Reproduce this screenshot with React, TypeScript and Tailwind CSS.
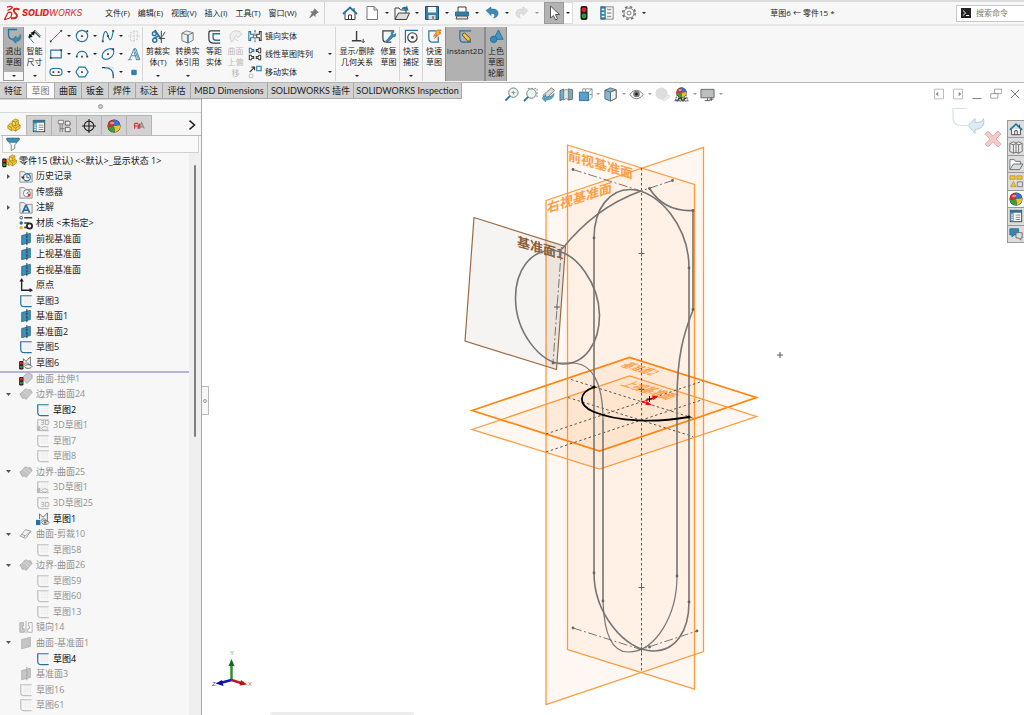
import { ReactNode, useState } from "react";

const BLUE = "#24749e";
const DARK = "#3c3c3c";

function Icon({ size = "size-4", children }: { size?: string; children: ReactNode }) {
  return (
    <svg viewBox="0 0 16 16" className={`${size} shrink-0`} fill="none" stroke={DARK} strokeWidth="1" aria-hidden="true">
      {children}
    </svg>
  );
}

function Caret({ dim = false }: { dim?: boolean }) {
  return (
    <svg viewBox="0 0 4 2" className="w-1 h-0.5 shrink-0" aria-hidden="true">
      <path d="M0 0h4L2 2z" fill={dim ? "#999" : "#222"} />
    </svg>
  );
}

/* ---------- shared drawings ---------- */

const trafficLight = (
  <g stroke="none">
    <rect x="4.500" y="1" width="7" height="14" rx="2" fill="#1c1c1c" />
    <circle cx="8" cy="4.800" r="2.400" fill="#e02424" />
    <circle cx="8" cy="11" r="2.400" fill="#2f9e2f" />
  </g>
);

const colorBall = (
  <g stroke="none">
    <circle cx="8" cy="8" r="7.500" fill="#333" />
    <path d="M8 8L7 1a7 7 0 0 1 8 6z" fill="#3b6fc8" />
    <path d="M8 8L7 1a7 7 0 0 0-6 8z" fill="#d93030" />
    <path d="M8 8l7-1a7 7 0 0 1-6 8z" fill="#f0c02c" />
    <path d="M8 8L1 9a7 7 0 0 0 8 6z" fill="#35a035" />
    <ellipse cx="6" cy="4.500" rx="2.500" ry="1.500" fill="#fff" opacity=".45" />
  </g>
);

const partShape = (
  <g stroke="#a37f12" strokeWidth=".8" strokeLinejoin="round">
    <path d="M1 8.500l3-2.500 2 1V3.500L9.500 1l3.500 1.500V7l2 1v3.500L10 15l-3-1.500-2 1L1 12z" fill="#f3ca3e" />
    <path d="M6 3.500L9.500 5 13 2.500M9.500 5v4L13 7M6 7v2l4 2.500V15M10 11.500L15 8M1 8.500L5 11v3.500M5 11l1-1" />
    <path d="M6 3.500L9.500 5v4L6 7.500z" fill="#ffe48a" />
  </g>
);

const homeShape = (
  <>
    <path d="M3 8v6.500h10V8" fill="#fff" />
    <path d="M6.500 14.500V10h3v4.500" />
    <path d="M1 9l7-6.500L15 9" stroke={BLUE} strokeWidth="1.800" />
    <path d="M12 3v3" stroke={DARK} />
  </>
);

const listShape = (
  <>
    <rect x="1.500" y="1.500" width="13" height="13" fill="#fff" />
    <path d="M2 2h3.500v12H2z" fill="#62a8cc" stroke="none" />
    <path d="M1.500 3h13" stroke={BLUE} strokeWidth="2.500" />
    <path d="M7.500 7h5.500M7.500 9.500h5.500M7.500 12h5.500" stroke="#777" />
    <path d="M2.500 7h2M2.500 9.500h2M2.500 12h2" stroke="#fff" />
  </>
);

const folderBase = <path d="M1 3h5l1.500 2H15v10H1z" fill="#eee" stroke="#888" />;

/* ---------- title bar ---------- */

const menus = ["文件(F)", "编辑(E)", "视图(V)", "插入(I)", "工具(T)", "窗口(W)"];

const quickActions: { label: string; dim?: boolean; icon: ReactNode }[] = [
  { label: "新建", icon: <path d="M3 1.500h7l3.500 3.500v9.500H3zM10 1.500V5h3.500" fill="#fff" stroke="#777" /> },
  {
    label: "打开",
    icon: (
      <>
        <path d="M1 14V3h4l1.500 2H12v3" fill="#fff" />
        <path d="M1 14.500l3.500-6.500H15.500l-3 6.500z" fill="#dcdcdc" />
        <path d="M7 5c1-3 3-4 5-3l1-1.500 1.500 5-4.500.5 1-1.500C9.500 3.500 8.500 4 7 5z" fill={BLUE} stroke="none" />
      </>
    ),
  },
  {
    label: "保存",
    icon: (
      <>
        <path d="M1.500 1.500h13v13h-13z" fill="#3580aa" stroke="#1b5573" />
        <path d="M4 2h8v5.500H4z" fill="#fff" stroke="none" />
        <path d="M4.500 10h7v4.500h-7z" fill="#ddd" stroke="none" />
        <path d="M9 11v3" />
      </>
    ),
  },
  {
    label: "打印",
    icon: (
      <>
        <path d="M4 7V2h8v5" fill="#fff" />
        <path d="M1.500 7h13v4h-13z" fill="#2f7fa9" stroke={BLUE} />
        <path d="M3 11h10l1 3H2z" fill="#ddd" stroke="#555" />
      </>
    ),
  },
  {
    label: "撤销",
    icon: <path d="M2 5.500l5-3.500v2.200c5-.7 7.500 1.600 7 4.800-.3 2.300-2 3.700-4.500 4 2-1.700 2-5-2.500-4.500v2z" fill="#3d8ab5" stroke="#286e93" strokeWidth=".6" />,
  },
  {
    label: "重做",
    dim: true,
    icon: <path d="M14 5.500L9 2v2.200c-5-.7-7.500 1.600-7 4.800.3 2.300 2 3.700 4.500 4-2-1.700-2-5 2.500-4.500v2z" fill="#dedede" stroke="#ccc" strokeWidth=".6" />,
  },
];

function TitleBar() {
  return (
    <header className="flex items-center h-[26px] shrink-0 bg-[#f7f7f7] border-t-2 border-b-2 border-t-[#dcdcdc] border-b-[#e6e6e6] text-[8px]">
      <div className="flex items-center w-[101px] ml-1 gap-0.5 text-[#d8281c]">
        <svg viewBox="0 0 16 16" className="size-4 shrink-0" fill="none" stroke="#d8281c" strokeWidth="1.300" aria-hidden="true">
          <path d="M3 2c4-1 6-.5 5 1-.8 1-2 1.500-4.500 2.500M4 7.500c4-1 4.500 1 3 4-1 1.800-3 2.500-6.500 3L4 7.500" />
          <path d="M15.500 4.500c-4-1.500-6.500-.5-5.500 2 .8 2 3.500 2.500 3 4.500-.5 2.500-3.500 2.500-6 2.200" strokeWidth="1.900" />
        </svg>
        <span className="italic text-[9px] font-[Inter]"><b className="font-extrabold">SOLID</b>WORKS</span>
      </div>
      <nav className="flex items-center gap-2 w-[204px]">
        {menus.map((m) => (
          <button key={m} className="whitespace-nowrap">{m}</button>
        ))}
      </nav>
      <button aria-label="固定" className="w-[15px]">
        <Icon size="size-2.5">
          <path d="M9 1l6 6-2 .5-3 3v3L7.500 11 1 15.500 5 8.500 2.500 6h3l3-3z" fill="#777" stroke="#777" />
        </Icon>
      </button>
      <div className="self-stretch w-px bg-[#d5d5d5] mr-[17px]" />
      <div className="flex items-center self-stretch">
        <button aria-label="主页" className="mr-1.5"><Icon>{homeShape}</Icon></button>
        {quickActions.map((a) => (
          <div key={a.label} className="flex items-center w-[30px]">
            <button aria-label={a.label}><Icon>{a.icon}</Icon></button>
            <span className="flex-1 flex justify-center"><Caret dim={a.dim} /></span>
          </div>
        ))}
        <button aria-label="选择" className="self-stretch w-5 flex items-center justify-center bg-[#b3b3b3] border border-[#999]">
          <Icon><path d="M4.500 1v12l3-2.500 2 4.500 2-1-2-4.500h4z" fill="#fff" stroke="#555" /></Icon>
        </button>
        <span className="self-stretch w-[9px] flex items-center justify-center bg-white border border-l-0 border-[#ddd]"><Caret /></span>
        <button aria-label="重建模型" className="w-[22px] flex justify-center"><Icon>{trafficLight}</Icon></button>
        <button aria-label="文件属性" className="w-6 flex justify-center">
          <Icon size="size-3.5">
            <rect x="1" y="1" width="14" height="14" fill="#fff" stroke="#777" />
            <path d="M1 1h5v14H1z" fill="#3a85ac" stroke={BLUE} />
            <path d="M2 4h3M2 8h3M2 12h3" stroke="#fff" strokeWidth="1.500" />
            <path d="M8 4h5M8 8h5M8 12h5" stroke="#999" strokeWidth="1.500" />
          </Icon>
        </button>
        <button aria-label="选项" className="w-5 flex justify-center">
          <Icon>
            <circle cx="8" cy="8" r="6.300" stroke="#777" strokeWidth="1.600" strokeDasharray="2.600 2.350" />
            <circle cx="8" cy="8" r="5" stroke="#777" fill="#fff" />
            <circle cx="8" cy="8" r="2" stroke="#777" />
          </Icon>
        </button>
        <span className="w-2.5 flex justify-center"><Caret /></span>
      </div>
      <h1 className="flex-1 text-center whitespace-nowrap">草图6 ← 零件15 *</h1>
      <label className="flex items-center gap-[5px] w-[68px] h-[17px] pl-1 bg-white border border-r-0 border-[#c8c8c8]">
        <Icon size="size-2.5">
          <path d="M0 0h16v16H0z" fill="#222" stroke="none" />
          <path d="M3 4l4.500 4L3 12M8 12h5" stroke="#fff" strokeWidth="1.500" />
        </Icon>
        <input aria-label="搜索命令" placeholder="搜索命令" className="w-full min-w-0 outline-none placeholder:text-[#777]" />
      </label>
    </header>
  );
}

/* ---------- ribbon ---------- */

function RibbonButton({ lines, icon, width, caret, active, dim }: {
  lines: string[]; icon: ReactNode; width: string; caret?: boolean; active?: boolean; dim?: boolean;
}) {
  return (
    <button className={`${width} shrink-0 flex flex-col items-center leading-[11px] whitespace-nowrap ${active ? "bg-[#b1b1b1] border-x border-[#8d8d8d]" : ""} ${dim ? "text-[#bbb]" : ""}`}>
      <span className="h-[18px] flex items-center"><Icon size="size-[15px]">{icon}</Icon></span>
      {lines.map((l) => <span key={l}>{l}</span>)}
      {caret && <span className="mt-auto mb-1 h-0.5 flex"><Caret /></span>}
    </button>
  );
}

const Divider = () => <div className="w-px bg-[#d6d6d6] shrink-0" />;

const drawTools: { label: string; caret?: boolean; icon: ReactNode }[] = [
  { label: "直线", caret: true, icon: <><path d="M2 14L14 2" stroke={BLUE} /><path d="M1 13h2v2H1zM13 1h2v2h-2z" fill={DARK} stroke="none" /></> },
  { label: "圆", caret: true, icon: <><circle cx="8" cy="8" r="6.500" stroke={BLUE} strokeWidth="1.300" /><path d="M7 7h2v2H7zM13 1.500h2v2h-2z" fill={DARK} stroke="none" /></> },
  { label: "样条曲线", caret: true, icon: <><path d="M2 14C3 1 6 0 8 7.500S12 14 14 2" stroke={BLUE} strokeWidth="1.300" /><path d="M1 13h2v2H1zM7 7h2v2H7zM13 1h2v2h-2z" fill={DARK} stroke="none" /></> },
  { label: "基准面", icon: <path d="M4 4l8-2v10l-8 2zM8 1v14M1 8h14" stroke="#ccc" strokeDasharray="2 1" /> },
  { label: "矩形", caret: true, icon: <><path d="M2 3.500h12v9H2z" stroke={BLUE} strokeWidth="1.300" /><path d="M1 11.500h2v2H1zM13 2.500h2v2h-2z" fill={DARK} stroke="none" /></> },
  { label: "圆弧", caret: true, icon: <><path d="M2 11c0-8 12-8 12 0" stroke={BLUE} strokeWidth="1.300" /><path d="M1 10h2v2H1zM13 10h2v2h-2zM7 10h2v2H7z" fill={DARK} stroke="none" /></> },
  { label: "椭圆", caret: true, icon: <><ellipse cx="8" cy="8" rx="7.500" ry="5" transform="rotate(-38 8 8)" stroke={BLUE} strokeWidth="1.300" /><path d="M7 7h2v2H7zM13 1.500h2v2h-2z" fill={DARK} stroke="none" /></> },
  { label: "文字", icon: <><path d="M1 14.500h4.500M10 14.500h5M3 14L8 2l5 12M5 10h6M8 5.500l3 9" stroke="#3a7fa5" /><path d="M8 2l2 0 4.500 12" stroke={BLUE} /></> },
  { label: "槽口", caret: true, icon: <><rect x="1" y="4" width="14" height="8" rx="4" stroke={BLUE} strokeWidth="1.300" /><path d="M4 7h2v2H4zM10 7h2v2h-2z" fill={DARK} stroke="none" /></> },
  { label: "多边形", icon: <><path d="M4.500 2.500h7L15 8l-3.500 5.500h-7L1 8z" stroke={BLUE} strokeWidth="1.300" /><path d="M7 7h2v2H7z" fill={DARK} stroke="none" /></> },
  { label: "圆角", caret: true, icon: <><path d="M4 3c6 0 10 3 10 9" stroke={BLUE} strokeWidth="1.500" /><path d="M1 3h4M14 11v4" stroke={DARK} strokeWidth="1.300" /><path d="M5 2.500h9v7" stroke="#bbb" strokeDasharray="1 1" /></> },
  { label: "点", icon: <path d="M5.500 6h5v5h-5z" fill="#2f82ae" stroke={BLUE} /> },
];

const patternTools: { label: string; caret?: boolean; icon: ReactNode }[] = [
  { label: "镜向实体", icon: <><path d="M1 3h2v3h3v4H3v3H1z" stroke={BLUE} strokeWidth="1.200" /><path d="M15 3h-2v3h-3v4h3v3h2z" strokeWidth="1.200" /><path d="M8 1v14" strokeDasharray="3 1" /></> },
  { label: "线性草图阵列", caret: true, icon: <><path d="M1.500 1.500h2l1 1.500h2v2h-2l-1 1.500h-2z" stroke={BLUE} strokeWidth="1.200" /><path d="M14.500 1.500h-2l-1 1.500h-2v2h2l1 1.500h2zM1.500 9.500h2l1 1.500h2v2h-2l-1 1.500h-2zM14.500 9.500h-2l-1 1.500h-2v2h2l1 1.500h2z" strokeWidth="1.200" /></> },
  { label: "移动实体", caret: true, icon: <><path d="M10 1.500h5v5h-5z" stroke={BLUE} strokeWidth="1.200" /><path d="M2 8l5-5M4 2.500h3.500V6" strokeWidth="1.300" /><path d="M1.500 10.500h4v4h-4z" stroke="#bbb" /></> },
];

function Ribbon() {
  return (
    <div className="flex h-[57px] shrink-0 pt-px pb-px pl-[3px] bg-[#f7f7f7] border-b border-[#b5b5b5] text-[8px]">
      <button className="w-[21px] shrink-0 flex flex-col items-center leading-[11px] bg-[#b1b1b1] border border-[#999] border-t-0">
        <span className="h-[18px] flex items-center">
          <Icon><path d="M11 1.500H2.500v5c0 3 2 5 5 5h1" stroke={BLUE} strokeWidth="1.300" /><path d="M6 11.500l4-3.500v2c3 0 4-2 4-4 2 4 0 7.500-4 7.500v2z" fill="#3a88b4" stroke="#286e93" strokeWidth=".5" /></Icon>
        </span>
        <span>退出</span><span>草图</span>
        <span className="mt-auto h-2 w-full flex items-center justify-center bg-[#f7f7f7]"><Caret /></span>
      </button>
      <RibbonButton width="w-[21px]" lines={["智能", "尺寸"]} caret icon={<><path d="M2 9l6-6M8 3l6 6" strokeWidth="1.200" /><path d="M8 3L4.500 4l2.500 2.500zM2 9l3.500-1L3 5.500zM9 1l-2 2" fill="#111" stroke="#111" /><path d="M9 2l5.500 5.500M2 9l5 5.500" stroke={BLUE} /></>} />
      <Divider />
      <div className="grid grid-cols-[26px_26px_26px_17px] grid-rows-3 w-[96px] pl-px shrink-0">
        {drawTools.map((t) => (
          <div key={t.label} className="flex items-center">
            <button aria-label={t.label} className="w-[18px] flex justify-center"><Icon size="size-3.5">{t.icon}</Icon></button>
            {t.caret && <span className="flex-1 flex justify-center"><Caret /></span>}
          </div>
        ))}
      </div>
      <Divider />
      <RibbonButton width="w-[30px]" lines={["剪裁实", "体(T)"]} caret icon={<><path d="M4 1l7 10M3 10l6-3" strokeWidth="1.700" stroke={BLUE} /><circle cx="4" cy="12" r="2.200" stroke={BLUE} strokeWidth="1.500" /><circle cx="3.500" cy="5" r="2" stroke={BLUE} strokeWidth="1.500" /><path d="M11 2v13M8 10h7M12 8l3-5" /></>} />
      <RibbonButton width="w-[29px]" lines={["转换实", "体引用"]} caret icon={<><path d="M2 4.500L7 2l7 2v8l-5.500 3L2 12.500z" fill="#eee" stroke="#777" /><path d="M2 4.500l6.500 2L14 4" stroke="#777" /><path d="M8.500 6.500V15" stroke={BLUE} strokeWidth="1.500" /></>} />
      <RibbonButton width="w-6" lines={["等距", "实体"]} icon={<><path d="M14 2H4C2 2 2 3 2 5v5c0 3 2 5 5 5h7" stroke={DARK} strokeWidth="1.300" /><path d="M14 5H6.500v4c0 2 1 3 3 3H14" stroke={BLUE} strokeWidth="1.500" /></>} />
      <RibbonButton width="w-[19px]" dim lines={["曲面", "上偏", "移"]} icon={<path d="M2 8c1-7 9-8 13-3l-4 4c-2-2-4-2-4 1l-3 4-1.500-3zM7 10l4 3" fill="#eee" stroke="#ccc" />} />
      <div className="flex flex-col w-[90px] shrink-0">
        {patternTools.map((t) => (
          <button key={t.label} className="flex-1 flex items-center whitespace-nowrap">
            <span className="w-5 flex justify-center"><Icon size="size-3.5">{t.icon}</Icon></span>
            <span className="flex-1 text-left">{t.label}</span>
            {t.caret && <span className="w-2.5 flex justify-center"><Caret /></span>}
          </button>
        ))}
      </div>
      <Divider />
      <RibbonButton width="w-[42px]" lines={["显示/删除", "几何关系"]} caret icon={<><path d="M7 2v10M2 12.500h10" strokeWidth="1.500" /><path d="M14 10.500v4M12 12.500l2 2 2-2" /></>} />
      <RibbonButton width="w-[21px]" lines={["修复", "草图"]} icon={<><path d="M14 2H2v8c0 3 1 4 4 4h5" strokeWidth="1.300" /><path d="M5 13l6-7c-1-3 1-4 3-3l-1.500 2 1 1L16 5c0 3-1 3.500-3 3.500L7 14z" fill="#3a88b4" stroke={BLUE} strokeWidth=".6" /></>} />
      <Divider />
      <RibbonButton width="w-[22px]" lines={["快速", "捕捉"]} caret icon={<><path d="M15 1.500H1.500V15" stroke={BLUE} strokeWidth="1.300" /><circle cx="9" cy="9" r="5" strokeWidth="1.200" /><circle cx="9" cy="9" r="1.500" fill={DARK} stroke="none" /></>} />
      <Divider />
      <RibbonButton width="w-[22px]" lines={["快速", "草图"]} icon={<><path d="M10 2H2v8c0 3 1 4 4 4h6V8" stroke={BLUE} strokeWidth="1.300" /><path d="M7 8l4-7h4l-2 3h2l-7 6 2.500-4z" fill="#f2b32d" stroke="#c5561c" strokeWidth=".7" /></>} />
      <RibbonButton width="w-10" active lines={["Instant2D"]} icon={<><path d="M14 2H2v8c0 3 1 4 4 4h8" stroke={BLUE} strokeWidth="1.300" /><path d="M5 5l2-1 6 6v3h-2.500L5 7z" fill="#f0c63c" stroke="#333" strokeWidth=".8" /></>} />
      <RibbonButton width="w-[22px]" active lines={["上色", "草图", "轮廓"]} icon={<><path d="M10 1l5 10H5z" fill="#4a94bd" stroke={BLUE} /><circle cx="5" cy="11" r="3.500" fill="#3a88b4" stroke={BLUE} /></>} />
    </div>
  );
}

/* ---------- command tabs and view toolbar ---------- */

const tabs = [
  { label: "特征", width: "w-[27px]" },
  { label: "草图", width: "w-7" },
  { label: "曲面", width: "w-[27px]" },
  { label: "钣金", width: "w-[27px]" },
  { label: "焊件", width: "w-[27px]" },
  { label: "标注", width: "w-[27px]" },
  { label: "评估", width: "w-7" },
  { label: "MBD Dimensions", width: "w-[77px]" },
  { label: "SOLIDWORKS 插件", width: "w-[86px]" },
  { label: "SOLIDWORKS Inspection", width: "w-[108px]" },
];

const viewTools: { label: string; width: string; caret?: boolean; icon: ReactNode }[] = [
  { label: "整屏显示全图", width: "w-[19px]", icon: <><circle cx="10" cy="6" r="5" fill="#eef5f9" stroke="#777" /><path d="M6.500 9.500L1.500 14.500" stroke={BLUE} strokeWidth="2" /><path d="M8 6h4M10 4v4" stroke="#888" /></> },
  { label: "局部放大", width: "w-[18px]", icon: <><circle cx="9" cy="7" r="5" fill="#eef5f9" stroke="#777" /><path d="M5.500 10.500L1 15" stroke={BLUE} strokeWidth="2" /><path d="M5 1.500h10v10" stroke="#888" strokeDasharray="2 1.500" /></> },
  { label: "上一视图", width: "w-[18px]", icon: <><path d="M2 9l9-8 3.500 2.500L5 13z" fill="#ddd" stroke="#777" /><path d="M1 12l4-4v2.500c5 0 7-1 9-4 0 5-3 7.500-9 7.500v2z" fill="#5e9fc2" stroke={BLUE} strokeWidth=".5" /></> },
  { label: "剖面视图", width: "w-[19px]", icon: <><path d="M1 4l4-2v11l-4 1.500zM10 2l4.500 1v10L10 14z" fill="#6aaed0" stroke="#555" strokeWidth=".8" /><path d="M5 4c2-2 4-2 5 0v10c-1-2-3-2-5 0z" fill="#e4e4e4" stroke="#777" strokeWidth=".8" /></> },
  { label: "视图定向", width: "w-[25px]", caret: true, icon: <><path d="M5 2h10v9l-4 4M11 5.500V15M15 2l-4 3.500M5 2v3M8 2v3M12 8h3" stroke="#777" strokeWidth=".8" /><path d="M1.500 5.500H11v9H1.500z" fill="#5c9fc4" stroke={BLUE} /></> },
  { label: "显示样式", width: "w-[26px]", caret: true, icon: <><path d="M2 3.500L8 1l6 2v9l-6 3-6-2.500z" fill="#7fbad8" stroke="#666" /><path d="M2 3.500L8 5.500 14 3" stroke="#666" /><path d="M8 5.500L14 3v9l-6 3z" fill="#e9f3f8" stroke="#666" /></> },
  { label: "隐藏/显示项目", width: "w-[26px]", caret: true, icon: <><path d="M1 8c4-6 10-6 14 0-4 6-10 6-14 0z" fill="#fff" stroke="#777" /><circle cx="8" cy="7.500" r="3.500" fill="#777" stroke="none" /><circle cx="8" cy="7.500" r="1.500" fill="#222" stroke="none" /></> },
  { label: "编辑外观", width: "w-[19px]", icon: <><circle cx="7" cy="7" r="6.500" fill="#dedede" stroke="none" /><path d="M8 14l6-6 2 2-6 5z" fill="#eee" stroke="#ddd" /></> },
  { label: "应用布景", width: "w-[26px]", caret: true, icon: <><path d="M1 15l2-6h10l2 6z" fill="#eee" stroke="#444" strokeDasharray="2 1" /><g transform="translate(2 0) scale(.75)">{colorBall}</g><path d="M2 14h3v-2h3v2h3v-2h2" strokeWidth="1.500" /></> },
  { label: "视图设置", width: "w-[26px]", caret: true, icon: <><path d="M1 2.500h14v9H1z" fill="#b9bec1" stroke="#666" /><path d="M8 12v2M5 14.500h6M12 11v4M10 13h4" stroke="#555" /></> },
];

function TabRow() {
  const [active, setActive] = useState("草图");
  return (
    <div className="relative z-10 flex h-4 shrink-0 text-[9px]">
      <div role="tablist" className="flex w-[499px] shrink-0 font-['Lato','Noto_Sans_CJK_SC',sans-serif]">
        {tabs.map((t) => (
          <button
            key={t.label}
            role="tab"
            aria-selected={t.label === active}
            onClick={() => setActive(t.label)}
            className={`${t.width} flex items-center justify-center whitespace-nowrap border-r border-b border-[#a8a8a8] ${t.label === active ? "bg-[#fbfbfb] text-[#777]" : "bg-[#d2d2d2] text-[#222]"}`}
          >
            {t.label}
          </button>
        ))}
      </div>
      <div className="flex items-start pt-[3px] pl-[5px] flex-1">
        {viewTools.map((t) => (
          <div key={t.label} className={`${t.width} h-4 flex items-center`}>
            <button aria-label={t.label}><Icon size="size-[15px]">{t.icon}</Icon></button>
            {t.caret && <span className="flex-1 flex justify-center"><Caret dim /></span>}
          </div>
        ))}
      </div>
      <div className="flex items-start gap-[7px] pt-[5px] pr-[3px]">
        <button aria-label="左侧面板"><Icon size="size-3"><path d="M2 1.500h12v13H2z" stroke="#aaa" /><path d="M7 5v6L3.500 8z" fill="#888" stroke="none" /></Icon></button>
        <button aria-label="右侧面板"><Icon size="size-3"><path d="M2 1.500h12v13H2z" stroke="#aaa" /><path d="M9 5v6l3.500-3z" fill="#888" stroke="none" /></Icon></button>
        <button aria-label="最小化"><Icon size="size-3"><path d="M2 14h12" stroke="#888" strokeWidth="1.500" /></Icon></button>
        <button aria-label="还原"><Icon size="size-3"><path d="M6 1.500h9.500v6H6zM1 7.500h9.500v6H1z" fill="#fff" stroke="#888" /></Icon></button>
        <button aria-label="关闭"><Icon size="size-3"><path d="M2.500 2.500l11 11M13.500 2.500l-11 11" stroke="#777" strokeWidth="1.300" /></Icon></button>
      </div>
    </div>
  );
}

/* ---------- feature tree ---------- */

const sketchLines = (color: string) => (
  <>
    <path d="M5 3.500h9M5 6.500h9M5 9.500h9M7 3v9M10 3v9M13 3v9" stroke="#e6e6e6" strokeWidth=".5" />
    <path d="M14.500 2H2v8.500c0 2.500 1.500 4 4 4h8.500" stroke={color} strokeWidth="1.400" />
  </>
);

const surfaceShape = (
  <>
    <path d="M1 8c3-1 4-5 7-6l2 1.500L13 3l2 3.500c-3 1-4 6-7 7.500l-2-1.500L4 13z" fill="#c4c4c4" stroke="#aaa" />
    <path d="M5 5l6 5M8 3l5 5" stroke="#ddd" />
  </>
);

const treeIcons: Record<string, ReactNode> = {
  history: <>{folderBase}<circle cx="9" cy="9.500" r="4" fill="#fff" stroke={BLUE} strokeWidth="1.300" /><path d="M9 7v3h2.500" /><path d="M3 9h3L4.500 11z" fill={DARK} /></>,
  sensor: <>{folderBase}<circle cx="9" cy="9.500" r="4" fill="#fff" stroke="#777" /><path d="M9 10l2-2.500" stroke="#333" /><path d="M10 10h3v3h-3z" fill="#d33" stroke="none" /></>,
  note: <>{folderBase}<path d="M8 5.500l-4 9M8 5.500l4 9M5.500 11.500h5" stroke={BLUE} strokeWidth="2" /></>,
  material: <><path d="M6 2h9M6 8h5M6 13h3" strokeWidth="1.800" /><circle cx="2.500" cy="2" r="1.500" fill="#fff" /><circle cx="2.500" cy="8" r="2" fill={BLUE} stroke="none" /><circle cx="2.500" cy="13.500" r="2" fill="#e6b52b" stroke="none" /><circle cx="12" cy="11.500" r="3" strokeWidth="2" stroke="#222" /></>,
  plane: <><path d="M3 4L13 1.500v10.500L3 14.500z" fill="#3d8fb8" stroke="#1d5f82" strokeWidth=".8" /><path d="M9 0v16" stroke="#222" strokeDasharray="3 1" /></>,
  planeDim: <><path d="M3 4L13 1.500v10.500L3 14.500z" fill="#c6c6c6" stroke="#a8a8a8" strokeWidth=".8" /><path d="M9 0v16" stroke="#999" strokeDasharray="3 1" /></>,
  origin: <><path d="M3 2v12h11" strokeWidth="1.500" stroke="#222" /><path d="M0.500 4L3 0l2.500 4zM12 11.500L16 14l-4 2.500z" fill="#222" stroke="none" /></>,
  sketch: sketchLines(BLUE),
  sketchDim: sketchLines("#c0c0c0"),
  sketch3d: <>{sketchLines("#c0c0c0")}<text x="5" y="8.500" fontSize="8" fill="#999" stroke="none">3D</text><path d="M1 9h4v6H1z" fill="#bbb" stroke="none" /><path d="M6 12c2-2.500 6-2.500 8 0-2 2.500-6 2.500-8 0z" stroke="#aaa" /></>,
  sketch3dEye: <>{sketchLines("#c0c0c0")}<path d="M1 9h4v6H1z" fill="#bbb" stroke="none" /><path d="M6 12c2-2.500 6-2.500 8 0-2 2.500-6 2.500-8 0z" stroke="#aaa" /></>,
  sketch3dPlain: <>{sketchLines("#c0c0c0")}<text x="5" y="12" fontSize="8" fill="#999" stroke="none">3D</text></>,
  sketchShared: <><path d="M4 8V2l4 4 5-5v10c-3-4-6-4-7-1M6 12c2-3 7-3 9 0-2 3-7 3-9 0z" stroke="#666" fill="#eee" /><circle cx="10.500" cy="12" r="1.500" fill="#777" stroke="none" /><path d="M0 9h5v6H0z" fill={BLUE} stroke="none" /></>,
  sketchLight: <><path d="M5 6V3l3 3 5-5v10c-3-4-6-4-7-1M6 12c2-3 7-3 9 0-2 3-7 3-9 0z" stroke="#666" fill="#eee" /><g transform="translate(-3 5) scale(.7)">{trafficLight}</g></>,
  extrudeLight: <><path d="M5 9V5l5-4 5 2v4l-6 6z" fill="#ccc" stroke="#aaa" /><g transform="translate(-3 5) scale(.7)">{trafficLight}</g></>,
  surface: surfaceShape,
  trim: <path d="M1 10c3 0 4-6 7-7l6 2c-3 1-4 7-7 8zM5 12l8-7M2 8l5 2" fill="#f4f4f4" stroke="#999" />,
  mirror: <><path d="M1 3h4v4H4v3h2v4H1z" fill="#ccc" stroke="#aaa" /><path d="M15 3h-4v4h1v3h-2v4h5z" fill="#fff" stroke="#aaa" /><path d="M8 1v14" stroke="#aaa" /></>,
  flat: <path d="M3 4L13 1.500v10.500L3 14.500z" fill="#c6c6c6" stroke="#a8a8a8" strokeWidth=".8" />,
};

type Node = { icon: string; label: string; dim?: boolean; child?: boolean; bold?: boolean; toggle?: "open" | "closed" };

const tree: Node[] = [
  { icon: "history", label: "历史记录", toggle: "closed" },
  { icon: "sensor", label: "传感器" },
  { icon: "note", label: "注解", toggle: "closed" },
  { icon: "material", label: "材质 <未指定>" },
  { icon: "plane", label: "前视基准面" },
  { icon: "plane", label: "上视基准面" },
  { icon: "plane", label: "右视基准面" },
  { icon: "origin", label: "原点" },
  { icon: "sketch", label: "草图3" },
  { icon: "plane", label: "基准面1" },
  { icon: "plane", label: "基准面2" },
  { icon: "sketch", label: "草图5" },
  { icon: "sketchLight", label: "草图6" },
  { icon: "extrudeLight", label: "曲面-拉伸1", dim: true },
  { icon: "surface", label: "边界-曲面24", dim: true, toggle: "open" },
  { icon: "sketch", label: "草图2", child: true, bold: true },
  { icon: "sketch3d", label: "3D草图1", child: true, dim: true },
  { icon: "sketchDim", label: "草图7", child: true, dim: true },
  { icon: "sketchDim", label: "草图8", child: true, dim: true },
  { icon: "surface", label: "边界-曲面25", dim: true, toggle: "open" },
  { icon: "sketch3dEye", label: "3D草图1", child: true, dim: true },
  { icon: "sketch3dPlain", label: "3D草图25", child: true, dim: true },
  { icon: "sketchShared", label: "草图1", child: true, bold: true },
  { icon: "trim", label: "曲面-剪裁10", dim: true, toggle: "open" },
  { icon: "sketchDim", label: "草图58", child: true, dim: true },
  { icon: "surface", label: "边界-曲面26", dim: true, toggle: "open" },
  { icon: "sketchDim", label: "草图59", child: true, dim: true },
  { icon: "sketchDim", label: "草图60", child: true, dim: true },
  { icon: "sketchDim", label: "草图13", child: true, dim: true },
  { icon: "mirror", label: "镜向14", dim: true },
  { icon: "flat", label: "曲面-基准面1", dim: true, toggle: "open" },
  { icon: "sketch", label: "草图4", child: true, bold: true },
  { icon: "planeDim", label: "基准面3", dim: true },
  { icon: "sketchDim", label: "草图16", dim: true },
  { icon: "sketchDim", label: "草图61", dim: true },
];

function TreeRow({ node }: { node: Node }) {
  return (
    <li className={`flex items-center whitespace-nowrap ${node.icon === "sketchLight" ? "shadow-[0_2px_0_#b4b4d8]" : ""}`}>
      <span className={`${node.child ? "w-9" : "w-[19px]"} shrink-0 pl-1.5`}>
        {node.toggle && (
          <button aria-label="展开/折叠" className="flex">
            <svg viewBox="0 0 5 5" className="size-[5px]" fill="#555" aria-hidden="true">
              <path d={node.toggle === "open" ? "M0 1h5L2.500 4z" : "M1 0v5l3-2.500z"} />
            </svg>
          </button>
        )}
      </span>
      <Icon size="size-3.5">{treeIcons[node.icon]}</Icon>
      <span className={`pl-[3px] ${node.dim ? "text-[#919191]" : node.bold ? "text-black" : "text-[#222]"}`}>{node.label}</span>
    </li>
  );
}

const panelTabs: { label: string; icon: ReactNode }[] = [
  { label: "设计树", icon: partShape },
  { label: "属性", icon: listShape },
  { label: "配置", icon: <><path d="M1.500 1.500h6v4h-6z" stroke="#777" fill="#eee" /><path d="M3.500 5.500V15M3.500 11h5M6 5.500V15" stroke="#777" /><path d="M9.500 2.500H14l1 1v3.500H9.500zM9.500 9.500H14l1 1V14.500H9.500z" fill="#eee" stroke="#555" /></> },
  { label: "尺寸", icon: <><circle cx="8" cy="8" r="5.500" strokeWidth="1.300" stroke="#222" /><path d="M8 0v16M0 8h16" strokeWidth="1.300" stroke="#222" /></> },
  { label: "外观", icon: colorBall },
  { label: "插件", icon: <><path d="M3 5v6M3 5h4M3 8h3M7 6v5M9 5l-1 6" stroke="#d33" strokeWidth="1.400" /><path d="M9 11l2-7 3 7M10 9h3" stroke="#888" strokeWidth="1.200" /></> },
];

function FeatureTree() {
  return (
    <aside className="flex flex-col w-[202px] shrink-0 bg-[#f7f7f7] border-r border-[#a8a8a8] text-[9px]">
      <div className="h-[14px] flex items-center justify-center border-t border-b border-[#d5dcdc] bg-[#fafafa]">
        <span className="size-[5px] rounded-full bg-[#ccc] border border-[#999]" />
      </div>
      <div className="flex items-center h-[21px] mt-0.5 ml-px border-b border-[#bbb]">
        {panelTabs.map((t, i) => (
          <button key={t.label} aria-label={t.label} className={`h-full flex items-center justify-center ${i === 0 ? "w-[26px] bg-[#f7f7f7]" : "bg-[#d2d2d2] border-x border-[#b4b4b4] border-t -ml-px w-[26px]"}`}>
            <Icon size="size-3.5">{t.icon}</Icon>
          </button>
        ))}
        <button aria-label="展开面板" className="ml-auto mr-1">
          <Icon size="size-2.5"><path d="M4 1l8 7-8 7" strokeWidth="2.500" stroke="#222" /></Icon>
        </button>
      </div>
      <label className="flex items-center h-[17px] mx-0.5 pl-[3px] border border-t-0 border-[#d0d0d0] bg-[#fafafa]">
        <Icon size="size-3.5">
          <path d="M1 1.500h14v2L10 9v4l-4 2.500V9L1 3.500z" fill="#fff" stroke="#777" />
          <path d="M1 1.500h14v1.700l-3 2.800H4L1 3.200z" fill="#3d8fb8" stroke={BLUE} />
        </Icon>
        <input aria-label="过滤" className="flex-1 min-w-0 outline-none" />
      </label>
      <div className="flex flex-1">
        <ul className="flex-1 grid auto-rows-fr pb-0.5 leading-3">
          <li className="flex items-center whitespace-nowrap pl-0.5 text-[#111]">
            <svg viewBox="0 0 17 16" className="w-[15px] h-3.5 shrink-0" aria-hidden="true">
              <g transform="translate(3 0) scale(.9)" fill="none">{partShape}</g>
              <g transform="translate(-3 4.500) scale(.7)">{trafficLight}</g>
            </svg>
            <span className="pl-0.5">零件15 (默认) &lt;&lt;默认&gt;_显示状态 1&gt;</span>
          </li>
          {tree.map((n, i) => <TreeRow key={i} node={n} />)}
        </ul>
        <div className="w-3 pt-3 flex justify-center bg-[#efefef]">
          <div className="w-0.5 h-[272px] bg-[#808080] rounded-full" />
        </div>
      </div>
    </aside>
  );
}

/* ---------- graphics area ---------- */

function Cross({ x, y, r = 3, color = "#666" }: { x: number; y: number; r?: number; color?: string }) {
  return <path d={`M${x - r} ${y}h${2 * r}M${x} ${y - r}v${2 * r}`} stroke={color} strokeWidth="1" />;
}

const endpoints = [
  [573, 169.5], [672.5, 180.5], [649.5, 188.5], [594, 238], [689, 268], [693, 210.5], [693, 309.5],
  [573, 628], [697, 631], [594, 573], [603, 601], [677, 576], [689, 602], [649.5, 647], [553, 363],
];

function Model() {
  return (
    <svg viewBox="202 99 822 616" className="absolute inset-0 w-full h-full" fill="none" aria-label="模型视图">
      <g fill="#ff8410" fillOpacity=".055" stroke="#ff9a3c" strokeWidth="1.300">
        <path d="M567.500 145L694.500 184.500V689L567.500 649.500z" />
        <path d="M546 200.500L703.500 147.500V651.500L546 704.500z" />
        <path d="M472 429.500L629.500 376L756.500 416.500L599.500 469z" />
        <path d="M472 410.500L629.500 357.500L756.500 397.500L599.500 451z" stroke="#ff8410" strokeWidth="1.700" />
      </g>
      <path d="M474 217.500L565.500 246.500L556.500 369.500L465 341z" fill="#6b4a3a" fillOpacity=".06" stroke="#996b43" strokeWidth="1.200" />
      <path d="M546 241L565.500 247L557 369L546 366z" fill="#555" fillOpacity=".06" />

      <g fontFamily="'Noto Sans CJK SC', sans-serif" fontWeight="700" fontSize="13" fill="#ff9f48">
        <text transform="translate(568 160) skewY(16)">前视基准面</text>
        <text transform="translate(547 213) skewY(-18)">右视基准面</text>
        <text transform="translate(517 246) skewY(16)" fill="#8c6038">基准面1</text>
        <text transform="translate(620 366) rotate(17) skewX(-52)" fontSize="9">基准面2</text>
        <text transform="translate(620 385) rotate(17) skewX(-52)" fontSize="10">上视基准面</text>
      </g>

      <g stroke="#555" strokeWidth="1" strokeDasharray="2.500 2.500">
        <path d="M641.500 168V672" />
        <path d="M571 379.500L693 418M546 434L703 381M568 397.500L693 436.500M546 452L703 399.500" />
      </g>
      <g stroke="#777" strokeWidth="1" strokeDasharray="9 2.500 2 2.500">
        <path d="M573 169.500L641 191L672.500 180.500M573 628L641 649.500L697 631M561.500 247L553 363" />
      </g>

      <g stroke="#757575" strokeWidth="1.600">
        <path d="M594 573V238C594 207 611 189.500 630 189.500C660 190 689 228 689 268V602C689 632 675 651 653 651C625 651 594 613 594 573z" />
        <path d="M562 249C584 222 608 203 641 191" />
        <path d="M515.500 298C515.500 270 531 250 552 250.500C577 251 599 285 599.500 315C599.500 343 585 364 563 364C540 363 515.500 332 515.500 298z" />
        <path d="M603 601V420M677 576V400C677 355 684 333 693 310V210.500C675 211.500 660 205 649.500 188.500" />
        <path d="M603 420C603 383 592 363 572 363H553" strokeWidth="1.200" />
        <path d="M603 601C604 632 611 652 628 652C656 652 677 615 677 576" strokeWidth="1.200" />
      </g>
      <path d="M594 387C578 393 578 405 593 411.500C618 422 655 423 689 417" stroke="#000" strokeWidth="1.800" />
      {endpoints.map(([x, y]) => <circle key={`${x}-${y}`} cx={x} cy={y} r="1.400" fill="#666" />)}
      <circle cx="594" cy="387" r="1.600" fill="#000" />
      <circle cx="689" cy="417" r="1.600" fill="#000" />

      <path d="M642 402L655 397.500M642 402L648 403.500" stroke="#f00" />
      <path d="M652 395.500l6.500 1-5.500 3.500zM646.500 401l5.500 4h-6.500z" fill="#f00" />
      <Cross x={649.5} y={399} color="#000" />
      <Cross x={641.5} y={253.5} />
      <Cross x={641.5} y={389.5} />
      <Cross x={641.5} y={587.5} />
      <Cross x={641.5} y={649.5} />
      <Cross x={557} y={307} />
      <Cross x={780} y={355} color="#555" />

      {/* orientation triad */}
      <g strokeWidth="2.500">
        <path d="M231.500 680V664" stroke="#2f8f2f" />
        <path d="M231.500 680L241 683" stroke="#b51f1f" />
        <path d="M231.500 680L222 682.500" stroke="#1717b8" />
      </g>
      <path d="M228.500 666L231.500 659L234.500 666z" fill="#116b11" />
      <path d="M241 680L247 684.500L239.500 685.500z" fill="#c01010" />
      <path d="M222 680L215.500 683.500L223.500 686z" fill="#0b0baf" />
      <g fontFamily="'Liberation Sans', sans-serif" fontSize="6">
        <text x="230" y="655" fill="#3fae3f">Y</text>
        <text x="248" y="686" fill="#f05050">X</text>
        <text x="212" y="686" fill="#4040e0">Z</text>
      </g>

      <g opacity=".5">
        <path d="M967 108.500H953v9c0 5 3 8 8 8h6" stroke="#a5c9dd" strokeWidth="1.200" />
        <path d="M968 125.500l7-7v4c5 0 8-1 8.500-4 1.500 7-2 10.500-8.500 11v4z" fill="#bcd8e6" stroke="#6d9cb5" />
      </g>
      <path d="M985 134l3-3 5 5 5-5 3 3-5 5 5 5-3 3-5-5-5 5-3-3 5-5z" fill="#f6c9c9" stroke="#e8b3b3" />
    </svg>
  );
}

const taskPane: { label: string; icon: ReactNode }[] = [
  { label: "资源", icon: homeShape },
  { label: "设计库", icon: <><path d="M1 4l4-2 3 1.500 3-1.500 4 2v9l-4 2-3-1-3 1-4-2z" fill="#eee" stroke="#666" /><path d="M5 5v10M8 4v10M11 5v10M1 4l4 1.500L8 4l3 1.500L15 4" stroke="#666" /></> },
  { label: "文件探索器", icon: <><path d="M1 14V3h5l1.500 2H13v3" fill="#fff" stroke="#666" /><path d="M1 14.500L5 8h11l-4 6.500z" fill="#ddd" stroke="#666" /></> },
  { label: "视图调色板", icon: <><path d="M1 2h6v4H1zM9 2h6v4H9zM2 14.500l3-6 3 6z" fill="#f5c52e" stroke="#a88418" strokeWidth=".7" /><path d="M9.500 9h6v5.500h-6z" fill="#ddd" stroke="#777" /></> },
  { label: "外观、布景", icon: colorBall },
  { label: "自定义属性", icon: listShape },
  { label: "论坛", icon: <><path d="M1 2h10v7H6l-2.500 2.500V9H1z" fill="#3a85ac" stroke={BLUE} /><path d="M8 6.500h7v6h-1.500V15L11 12.500H8z" fill="#ddd" stroke="#666" /></> },
];

export default function App() {
  return (
    <div className="min-h-screen flex flex-col bg-white overflow-hidden text-[#222] font-['Open_Sans','Noto_Sans_CJK_SC',sans-serif]">
      <TitleBar />
      <Ribbon />
      <TabRow />
      <div className="flex flex-1">
        <FeatureTree />
        <main className="relative flex-1 overflow-hidden">
          <Model />
          <button aria-label="折叠面板" className="absolute left-0 top-[287px] w-[7px] h-[29px] flex items-center justify-center border border-l-0 border-[#bbb] bg-[#f7f7f7]">
            <span className="size-1 rounded-full border border-[#999]" />
          </button>
          <div className="absolute right-0 top-[21px] w-[17px] h-[123px] flex flex-col border-l border-t border-[#999]">
            {taskPane.map((t, i) => (
              <button key={t.label} aria-label={t.label} className={`flex-1 flex items-center justify-center border-b border-[#999] ${i === 4 ? "bg-white" : "bg-[#dcdcdc]"}`}>
                <Icon size="size-3.5">{t.icon}</Icon>
              </button>
            ))}
          </div>
          <div className="absolute bottom-0 left-[68px] w-[144px] h-[3px] rounded-t-full bg-[#ececec]" />
        </main>
      </div>
    </div>
  );
}
